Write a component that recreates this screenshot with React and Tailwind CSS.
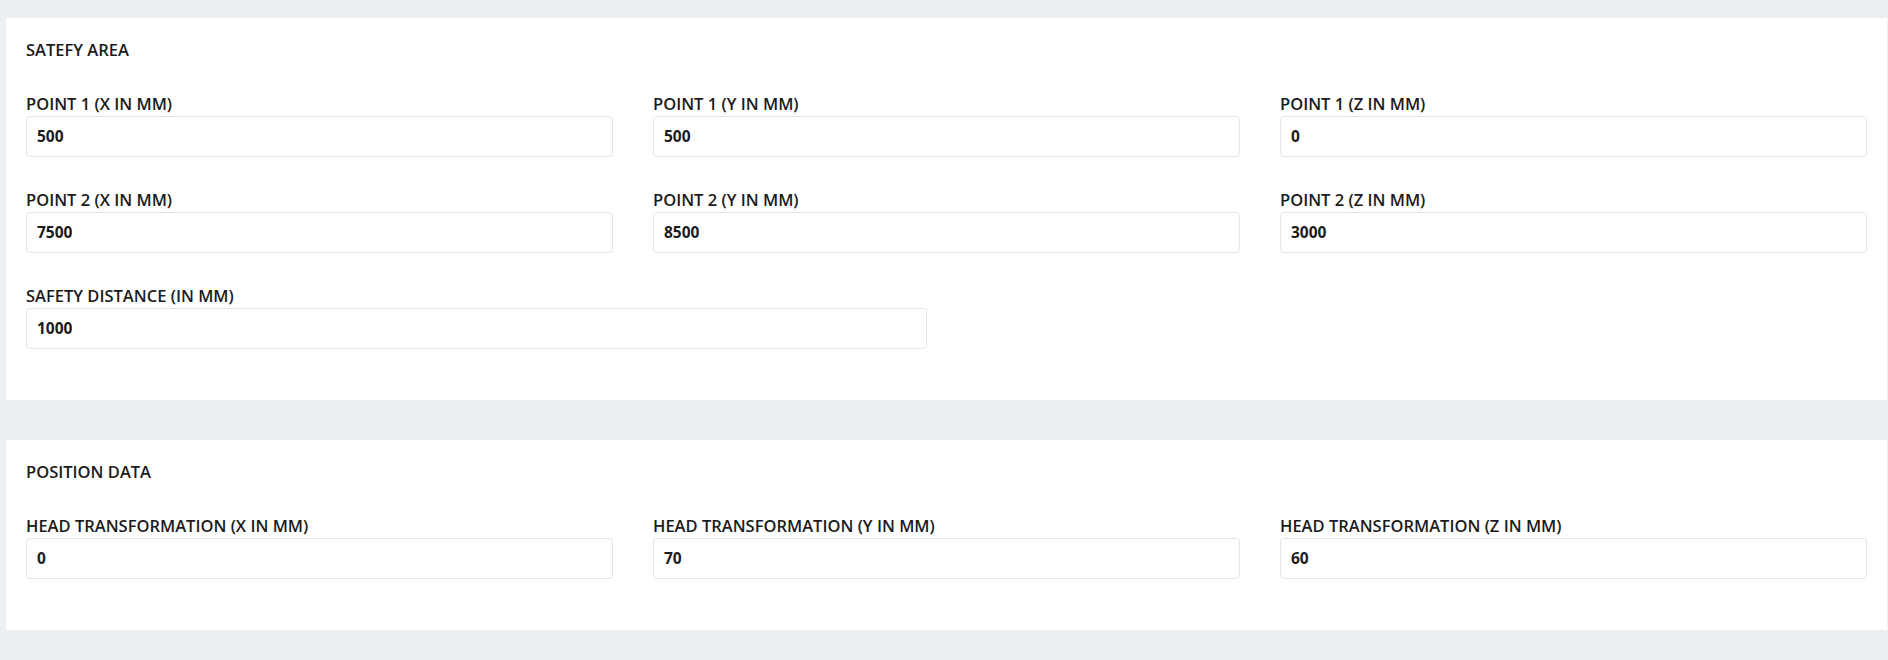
const FONT = { fontFamily: '"Open Sans", "Noto Sans", sans-serif' }

function Field({ label, value }) {
  return (
    <div className="flex flex-col">
      <label className="text-[16.5px] leading-[18px] font-semibold text-[#1b1b1b] mb-[3px]">{label}</label>
      <input
        readOnly
        value={value}
        className="h-[41px] w-full rounded-[4px] border border-[#dfe4ec] bg-white px-[10px] pb-px text-[15.5px] font-bold text-[#1b1b1b] outline-none"
      />
    </div>
  )
}

function Card({ title, children }) {
  return (
    <div className="bg-white px-5 pt-[22px] pb-[51px]">
      <p className="text-[16.5px] leading-5 font-semibold text-[#1b1b1b]">{title}</p>
      <div className="mt-[35px] flex flex-col gap-[34px]">{children}</div>
    </div>
  )
}

export default function App() {
  return (
    <div className="min-h-[660px] bg-[#ecf0f3] pl-[6px] pr-px pt-[18px] pb-[30px]" style={FONT}>
      <div className="flex flex-col gap-10">
        <Card title="SATEFY AREA">
          <div className="grid grid-cols-3 gap-x-10">
            <Field label="POINT 1 (X IN MM)" value="500" />
            <Field label="POINT 1 (Y IN MM)" value="500" />
            <Field label="POINT 1 (Z IN MM)" value="0" />
          </div>
          <div className="grid grid-cols-3 gap-x-10">
            <Field label="POINT 2 (X IN MM)" value="7500" />
            <Field label="POINT 2 (Y IN MM)" value="8500" />
            <Field label="POINT 2 (Z IN MM)" value="3000" />
          </div>
          <div className="grid grid-cols-2 gap-x-10">
            <Field label="SAFETY DISTANCE (IN MM)" value="1000" />
          </div>
        </Card>
        <Card title="POSITION DATA">
          <div className="grid grid-cols-3 gap-x-10">
            <Field label="HEAD TRANSFORMATION (X IN MM)" value="0" />
            <Field label="HEAD TRANSFORMATION (Y IN MM)" value="70" />
            <Field label="HEAD TRANSFORMATION (Z IN MM)" value="60" />
          </div>
        </Card>
      </div>
    </div>
  )
}
